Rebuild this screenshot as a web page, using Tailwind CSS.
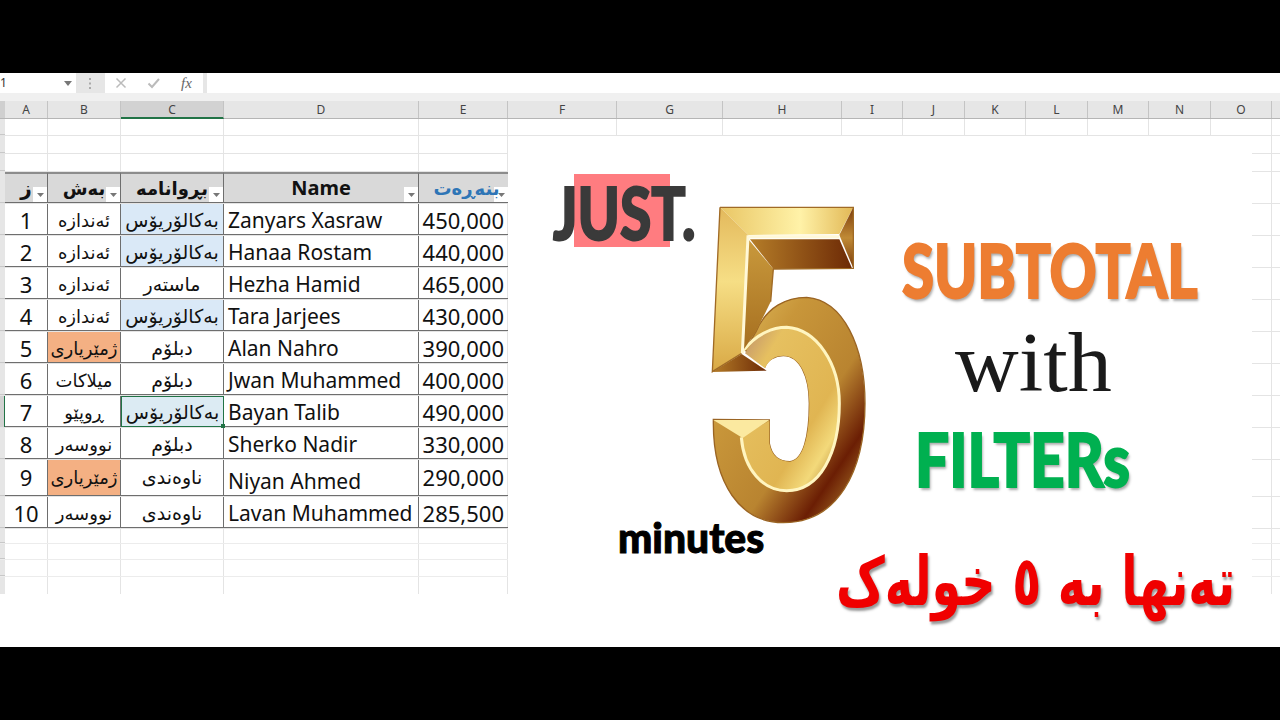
<!DOCTYPE html>
<html lang="ckb">
<head>
  <meta charset="UTF-8">
  <title>SUBTOTAL with FILTERs</title>
  <script src="https://cdn.jsdelivr.net/npm/@tailwindcss/browser@4"></script>
</head>
<body class="bg-black w-[1280px] h-[720px] overflow-hidden font-['Noto_Sans','DejaVu_Sans',sans-serif]">
  <div class="h-[73px]"></div>

  <!-- formula bar -->
  <div class="flex h-5 bg-[#e6e6e6] text-[#555]">
    <div class="w-[76px] bg-white flex items-center justify-between pr-1 text-[12px] text-[#333]">
      <span>1</span>
      <svg width="8" height="5" viewBox="0 0 8 5"><path d="M0 0h8L4 5z" fill="#777"/></svg>
    </div>
    <div class="w-[29px] flex items-center justify-center">
      <svg width="3" height="11" viewBox="0 0 3 11"><path d="M0 0h2v2H0zM0 4.500h2v2H0zM0 9h2v2H0z" fill="#aaa"/></svg>
    </div>
    <div class="w-[98px] bg-white flex items-center">
      <svg class="ml-[10px]" width="12" height="12" viewBox="0 0 12 12"><path d="M1.500 1.500l9 9M10.500 1.500l-9 9" stroke="#bbb" stroke-width="1.500" fill="none"/></svg>
      <svg class="ml-[20px]" width="14" height="12" viewBox="0 0 14 12"><path d="M1.500 6.500l3.500 3.500 7-8" stroke="#bbb" stroke-width="2" fill="none"/></svg>
      <span class="ml-[20px] italic text-[15px] text-[#666] font-['Liberation_Serif',serif]">fx</span>
    </div>
    <div class="w-1"></div>
    <div class="flex-1 bg-white"></div>
  </div>
  <div class="h-2 bg-[#f0f0f0]"></div>

  <!-- column headers -->
  <div class="flex h-[18px] bg-[#e6e6e6] text-[12px] leading-[18px] text-center text-[#444] border-b border-[#b5b5b5]">
    <div class="w-[5px] bg-[#cfcfcf]"></div>
    <div class="w-[43px] border-r border-[#c4c4c4]">A</div>
    <div class="w-[73px] border-r border-[#c4c4c4]">B</div>
    <div class="w-[103px] bg-[#d2d2d2] border-r border-[#c4c4c4] border-b-2 border-b-[#217346] h-[18px]">C</div>
    <div class="w-[195px] border-r border-[#c4c4c4]">D</div>
    <div class="w-[89px] border-r border-[#c4c4c4]">E</div>
    <div class="w-[109px] border-r border-[#c4c4c4]">F</div>
    <div class="w-[106px] border-r border-[#c4c4c4]">G</div>
    <div class="w-[119px] border-r border-[#c4c4c4]">H</div>
    <div class="w-[61px] border-r border-[#c4c4c4]">I</div>
    <div class="w-[62px] border-r border-[#c4c4c4]">J</div>
    <div class="w-[61px] border-r border-[#c4c4c4]">K</div>
    <div class="w-[62px] border-r border-[#c4c4c4]">L</div>
    <div class="w-[61px] border-r border-[#c4c4c4]">M</div>
    <div class="w-[62px] border-r border-[#c4c4c4]">N</div>
    <div class="w-[61px] border-r border-[#c4c4c4]">O</div>
  </div>

  <!-- sheet -->
  <div class="relative h-[528px] bg-white">
    <!-- gridlines, vertical -->
    <div class="absolute top-0 left-[5px] h-[475px] flex">
      <div class="w-[43px] border-r border-[#e4e4e4]"></div>
      <div class="w-[73px] border-r border-[#e4e4e4]"></div>
      <div class="w-[103px] border-r border-[#e4e4e4]"></div>
      <div class="w-[195px] border-r border-[#e4e4e4]"></div>
      <div class="w-[89px] border-r border-[#e4e4e4]"></div>
      <div class="w-[109px] border-r border-[#e4e4e4]"></div>
      <div class="w-[106px] border-r border-[#e4e4e4]"></div>
      <div class="w-[119px] border-r border-[#e4e4e4]"></div>
      <div class="w-[61px] border-r border-[#e4e4e4]"></div>
      <div class="w-[62px] border-r border-[#e4e4e4]"></div>
      <div class="w-[61px] border-r border-[#e4e4e4]"></div>
      <div class="w-[62px] border-r border-[#e4e4e4]"></div>
      <div class="w-[61px] border-r border-[#e4e4e4]"></div>
      <div class="w-[62px] border-r border-[#e4e4e4]"></div>
      <div class="w-[61px] border-r border-[#e4e4e4]"></div>
    </div>

    <!-- rows -->
    <div class="relative text-[21px] text-[#111]">
      <div class="h-[17px] flex border-b border-[#e4e4e4]"><div class="w-[5px] bg-[#e6e6e6] border-b border-[#c8c8c8]"></div></div>
      <div class="h-[18px] flex border-b border-[#e4e4e4]"><div class="w-[5px] bg-[#e6e6e6] border-b border-[#c8c8c8]"></div></div>
      <div class="h-[18px] flex border-b border-[#e4e4e4]"><div class="w-[5px] bg-[#e6e6e6] border-b border-[#c8c8c8]"></div></div>

      <!-- table head -->
      <div class="h-8 flex font-bold text-[18px] leading-none border-b border-[#e4e4e4]">
        <div class="w-[5px] bg-[#e6e6e6] border-b border-[#c8c8c8]"></div>
        <div class="relative w-[43px] bg-[#d9d9d9] border-t-2 border-t-[#8c8c8c] border-b border-r border-[#6e6e6e] flex items-center justify-center text-[20px]">ز<span class="absolute right-0 bottom-0 w-[14px] h-[15px] bg-white flex items-center justify-center"><svg width="7" height="4" viewBox="0 0 7 4"><path d="M0 0h7L3.500 4z" fill="#777"/></svg></span></div>
        <div class="relative w-[73px] bg-[#d9d9d9] border-t-2 border-t-[#8c8c8c] border-b border-r border-[#6e6e6e] flex items-center justify-center">بەش<span class="absolute right-0 bottom-0 w-[14px] h-[15px] bg-white flex items-center justify-center"><svg width="7" height="4" viewBox="0 0 7 4"><path d="M0 0h7L3.500 4z" fill="#777"/></svg></span></div>
        <div class="relative w-[103px] bg-[#d9d9d9] border-t-2 border-t-[#8c8c8c] border-b border-r border-[#6e6e6e] flex items-center justify-center">بڕوانامە<span class="absolute right-0 bottom-0 w-[14px] h-[15px] bg-white flex items-center justify-center"><svg width="7" height="4" viewBox="0 0 7 4"><path d="M0 0h7L3.500 4z" fill="#777"/></svg></span></div>
        <div class="relative w-[195px] bg-[#d9d9d9] border-t-2 border-t-[#8c8c8c] border-b border-r border-[#6e6e6e] flex items-center justify-center text-[20px]">Name<span class="absolute right-0 bottom-0 w-[14px] h-[15px] bg-white flex items-center justify-center"><svg width="7" height="4" viewBox="0 0 7 4"><path d="M0 0h7L3.500 4z" fill="#777"/></svg></span></div>
        <div class="relative w-[89px] bg-[#d9d9d9] border-t-2 border-t-[#8c8c8c] border-b border-[#6e6e6e] flex items-center justify-center pl-[6px] text-[#2e75b6]"><span class="absolute right-0 bottom-0 w-[14px] h-[15px] bg-white flex items-center justify-center"><svg width="7" height="4" viewBox="0 0 7 4"><path d="M0 0h7L3.500 4z" fill="#777"/></svg></span><span class="relative">بنەڕەت</span></div>
      </div>

      <!-- table body -->
      <div class="h-8 flex border-b border-[#e4e4e4]">
        <div class="w-[5px] bg-[#e6e6e6] border-b border-[#c8c8c8]"></div>
        <div class="w-[43px] border-b border-r border-[#6e6e6e] flex items-center justify-center pt-[2px] text-[22px]">1</div>
        <div class="w-[73px] border-b border-r border-[#6e6e6e] flex items-center justify-center pt-[2px] text-[18px]">ئەندازە</div>
        <div class="w-[103px] border-b border-r border-[#6e6e6e] bg-[#dae9f7] flex items-center justify-center pt-[2px] text-[19px]">بەکالۆریۆس</div>
        <div class="w-[195px] border-b border-r border-[#6e6e6e] flex items-center pl-[4px] pt-[4px]">Zanyars Xasraw</div>
        <div class="w-[89px] border-b border-[#6e6e6e] flex items-center justify-end pr-[4px] pt-[2px] text-[22px]">450,000</div>
      </div>
      <div class="h-8 flex border-b border-[#e4e4e4]">
        <div class="w-[5px] bg-[#e6e6e6] border-b border-[#c8c8c8]"></div>
        <div class="w-[43px] border-b border-r border-[#6e6e6e] flex items-center justify-center pt-[2px] text-[22px]">2</div>
        <div class="w-[73px] border-b border-r border-[#6e6e6e] flex items-center justify-center pt-[2px] text-[18px]">ئەندازە</div>
        <div class="w-[103px] border-b border-r border-[#6e6e6e] bg-[#dae9f7] flex items-center justify-center pt-[2px] text-[19px]">بەکالۆریۆس</div>
        <div class="w-[195px] border-b border-r border-[#6e6e6e] flex items-center pl-[4px] pt-[4px]">Hanaa Rostam</div>
        <div class="w-[89px] border-b border-[#6e6e6e] flex items-center justify-end pr-[4px] pt-[2px] text-[22px]">440,000</div>
      </div>
      <div class="h-8 flex border-b border-[#e4e4e4]">
        <div class="w-[5px] bg-[#e6e6e6] border-b border-[#c8c8c8]"></div>
        <div class="w-[43px] border-b border-r border-[#6e6e6e] flex items-center justify-center pt-[2px] text-[22px]">3</div>
        <div class="w-[73px] border-b border-r border-[#6e6e6e] flex items-center justify-center pt-[2px] text-[18px]">ئەندازە</div>
        <div class="w-[103px] border-b border-r border-[#6e6e6e] flex items-center justify-center pt-[2px] text-[19px]">ماستەر</div>
        <div class="w-[195px] border-b border-r border-[#6e6e6e] flex items-center pl-[4px] pt-[4px]">Hezha Hamid</div>
        <div class="w-[89px] border-b border-[#6e6e6e] flex items-center justify-end pr-[4px] pt-[2px] text-[22px]">465,000</div>
      </div>
      <div class="h-8 flex border-b border-[#e4e4e4]">
        <div class="w-[5px] bg-[#e6e6e6] border-b border-[#c8c8c8]"></div>
        <div class="w-[43px] border-b border-r border-[#6e6e6e] flex items-center justify-center pt-[2px] text-[22px]">4</div>
        <div class="w-[73px] border-b border-r border-[#6e6e6e] flex items-center justify-center pt-[2px] text-[18px]">ئەندازە</div>
        <div class="w-[103px] border-b border-r border-[#6e6e6e] bg-[#dae9f7] flex items-center justify-center pt-[2px] text-[19px]">بەکالۆریۆس</div>
        <div class="w-[195px] border-b border-r border-[#6e6e6e] flex items-center pl-[4px] pt-[4px]">Tara Jarjees</div>
        <div class="w-[89px] border-b border-[#6e6e6e] flex items-center justify-end pr-[4px] pt-[2px] text-[22px]">430,000</div>
      </div>
      <div class="h-8 flex border-b border-[#e4e4e4]">
        <div class="w-[5px] bg-[#e6e6e6] border-b border-[#c8c8c8]"></div>
        <div class="w-[43px] border-b border-r border-[#6e6e6e] flex items-center justify-center pt-[2px] text-[22px]">5</div>
        <div class="w-[73px] border-b border-r border-[#6e6e6e] bg-[#f4b083] flex items-center justify-center pt-[2px] text-[18px]">ژمێریاری</div>
        <div class="w-[103px] border-b border-r border-[#6e6e6e] flex items-center justify-center pt-[2px] text-[19px]">دبلۆم</div>
        <div class="w-[195px] border-b border-r border-[#6e6e6e] flex items-center pl-[4px] pt-[4px]">Alan Nahro</div>
        <div class="w-[89px] border-b border-[#6e6e6e] flex items-center justify-end pr-[4px] pt-[2px] text-[22px]">390,000</div>
      </div>
      <div class="h-8 flex border-b border-[#e4e4e4]">
        <div class="w-[5px] bg-[#e6e6e6] border-b border-[#c8c8c8]"></div>
        <div class="w-[43px] border-b border-r border-[#6e6e6e] flex items-center justify-center pt-[2px] text-[22px]">6</div>
        <div class="w-[73px] border-b border-r border-[#6e6e6e] flex items-center justify-center pt-[2px] text-[18px]">میلاکات</div>
        <div class="w-[103px] border-b border-r border-[#6e6e6e] flex items-center justify-center pt-[2px] text-[19px]">دبلۆم</div>
        <div class="w-[195px] border-b border-r border-[#6e6e6e] flex items-center pl-[4px] pt-[4px]">Jwan Muhammed</div>
        <div class="w-[89px] border-b border-[#6e6e6e] flex items-center justify-end pr-[4px] pt-[2px] text-[22px]">400,000</div>
      </div>
      <div class="h-8 flex border-b border-[#e4e4e4]">
        <div class="w-[5px] bg-[#d2d2d2] border-r border-[#217346]"></div>
        <div class="w-[43px] border-b border-r border-[#6e6e6e] flex items-center justify-center pt-[2px] text-[22px]">7</div>
        <div class="w-[73px] border-b border-r border-[#6e6e6e] flex items-center justify-center pt-[2px] text-[18px]">ڕوپێو</div>
        <div class="relative w-[103px] border border-[#217346] bg-[#dcebf3] flex items-center justify-center pt-[2px] text-[19px]">بەکالۆریۆس<span class="absolute -right-[2px] -bottom-[2px] w-[4px] h-[4px] bg-[#217346]"></span></div>
        <div class="w-[195px] border-b border-r border-[#6e6e6e] flex items-center pl-[4px] pt-[4px]">Bayan Talib</div>
        <div class="w-[89px] border-b border-[#6e6e6e] flex items-center justify-end pr-[4px] pt-[2px] text-[22px]">490,000</div>
      </div>
      <div class="h-8 flex border-b border-[#e4e4e4]">
        <div class="w-[5px] bg-[#e6e6e6] border-b border-[#c8c8c8]"></div>
        <div class="w-[43px] border-b border-r border-[#6e6e6e] flex items-center justify-center pt-[2px] text-[22px]">8</div>
        <div class="w-[73px] border-b border-r border-[#6e6e6e] flex items-center justify-center pt-[2px] text-[18px]">نووسەر</div>
        <div class="w-[103px] border-b border-r border-[#6e6e6e] flex items-center justify-center pt-[2px] text-[19px]">دبلۆم</div>
        <div class="w-[195px] border-b border-r border-[#6e6e6e] flex items-center pl-[4px] pt-[4px]">Sherko Nadir</div>
        <div class="w-[89px] border-b border-[#6e6e6e] flex items-center justify-end pr-[4px] pt-[2px] text-[22px]">330,000</div>
      </div>
      <div class="h-[37px] flex border-b border-[#e4e4e4]">
        <div class="w-[5px] bg-[#e6e6e6] border-b border-[#c8c8c8]"></div>
        <div class="w-[43px] border-b border-r border-[#6e6e6e] flex items-center justify-center text-[22px]">9</div>
        <div class="w-[73px] border-b border-r border-[#6e6e6e] bg-[#f4b083] flex items-center justify-center text-[18px]">ژمێریاری</div>
        <div class="w-[103px] border-b border-r border-[#6e6e6e] flex items-center justify-center text-[19px]">ناوەندی</div>
        <div class="w-[195px] border-b border-r border-[#6e6e6e] flex items-center pl-[4px] pt-[9px]">Niyan Ahmed</div>
        <div class="w-[89px] border-b border-[#6e6e6e] flex items-center justify-end pr-[4px] text-[22px]">290,000</div>
      </div>
      <div class="h-8 flex border-b border-[#e4e4e4]">
        <div class="w-[5px] bg-[#e6e6e6] border-b border-[#c8c8c8]"></div>
        <div class="w-[43px] border-b border-r border-[#6e6e6e] flex items-center justify-center pt-[2px] text-[22px]">10</div>
        <div class="w-[73px] border-b border-r border-[#6e6e6e] flex items-center justify-center pt-[2px] text-[18px]">نووسەر</div>
        <div class="w-[103px] border-b border-r border-[#6e6e6e] flex items-center justify-center pt-[2px] text-[19px]">ناوەندی</div>
        <div class="w-[195px] border-b border-r border-[#6e6e6e] flex items-center pl-[4px] pt-[4px]">Lavan Muhammed</div>
        <div class="w-[89px] border-b border-[#6e6e6e] flex items-center justify-end pr-[4px] pt-[2px] text-[22px]">285,500</div>
      </div>

      <div class="h-[15px] flex border-b border-[#ececec]"><div class="w-[5px] bg-[#e6e6e6] border-b border-[#c8c8c8]"></div></div>
      <div class="h-4 flex border-b border-[#ececec]"><div class="w-[5px] bg-[#e6e6e6] border-b border-[#c8c8c8]"></div></div>
      <div class="h-[17px] flex border-b border-[#ececec]"><div class="w-[5px] bg-[#e6e6e6] border-b border-[#c8c8c8]"></div></div>
      <div class="h-[17px] flex"><div class="w-[5px] bg-[#e6e6e6]"></div></div>
    </div>

    <!-- pasted picture over the sheet -->
    <div class="absolute left-[508px] top-[17px] w-[744px] h-[511px] bg-white"></div>

    <!-- JUST. -->
    <div class="absolute left-[574px] top-[55px] w-[96px] h-[73px] bg-[#ff7c80]"></div>
    <div class="absolute left-[553px] top-[53px] text-[72px] leading-[80px] font-black text-[#3a3a3a] font-['Lato',sans-serif] origin-left scale-x-[.79] whitespace-nowrap [-webkit-text-stroke:2px_#3a3a3a]">JUST.</div>

    <!-- gold 5 -->
    <svg class="absolute left-[680px] top-[71px]" width="200" height="350" viewBox="0 0 600 1050">
      <defs>
        <linearGradient id="g-top" x1="0" y1="0" x2="1" y2="0"><stop offset="0" stop-color="#e9c665"/><stop offset=".6" stop-color="#fff2a8"/><stop offset="1" stop-color="#e2b856"/></linearGradient>
        <linearGradient id="g-under" x1="0" y1="0" x2="1" y2="0"><stop offset="0" stop-color="#b57d28"/><stop offset="1" stop-color="#6d2a06"/></linearGradient>
        <linearGradient id="g-corner" x1="0" y1="0" x2="0" y2="1"><stop offset="0" stop-color="#7a3a0c"/><stop offset=".5" stop-color="#c08a35"/><stop offset="1" stop-color="#7a3a0c"/></linearGradient>
        <linearGradient id="g-left" x1="0" y1="0" x2="0" y2="1"><stop offset="0" stop-color="#e3b95c"/><stop offset=".45" stop-color="#f6de85"/><stop offset="1" stop-color="#d9a945"/></linearGradient>
        <linearGradient id="g-col" x1="0" y1="0" x2="0" y2="1"><stop offset="0" stop-color="#c9993c"/><stop offset="1" stop-color="#a66f20"/></linearGradient>
        <linearGradient id="g-bowl" x1="0" y1="0" x2="1" y2="1"><stop offset="0" stop-color="#e6c565"/><stop offset=".3" stop-color="#c8963a"/><stop offset=".6" stop-color="#b98430"/><stop offset=".79" stop-color="#6b1e04"/><stop offset=".9" stop-color="#9a6020"/><stop offset="1" stop-color="#9a6020"/></linearGradient>
        <linearGradient id="g-front" x1="0" y1="0" x2="1" y2="1"><stop offset="0" stop-color="#b98a70"/><stop offset=".22" stop-color="#e6c060"/><stop offset=".65" stop-color="#e0b552"/><stop offset=".8" stop-color="#f3d97a"/><stop offset="1" stop-color="#a26c20"/></linearGradient>
      </defs>
      <path d="M228 425C260 350 320 322 380 322C490 330 555 470 555 640C555 850 470 998 310 998C180 998 100 880 100 700V688L268 690V760C275 800 300 815 330 815C370 810 388 740 388 640C388 560 360 497 310 497C285 497 262 510 255 530L195 480Z" fill="url(#g-bowl)" stroke="#9a6423" stroke-width="4"/>
      <path d="M195 490C230 430 280 415 320 415C410 420 478 520 478 640C478 790 420 905 320 905C250 905 190 840 182 742L268 692V760C275 800 300 815 330 815C370 810 388 740 388 640C388 560 360 497 310 497C285 497 265 510 255 535Z" fill="url(#g-front)"/>
      <path d="M190 482C230 430 280 412 320 412C410 418 478 520 478 640C478 790 420 902 320 902C250 902 192 840 184 742" fill="none" stroke="#fff5c0" stroke-width="9"/>
      <path d="M100 690H268L188 744Z" fill="#fbe9a0"/>
      <path d="M205 148L280 237L272 335L228 425L190 480Z" fill="url(#g-col)"/>
      <path d="M210 148H478L516 235L280 237Z" fill="url(#g-under)"/>
      <path d="M120 52H520L478 132L205 135Z" fill="url(#g-top)"/>
      <path d="M520 52V235L478 135Z" fill="url(#g-corner)"/>
      <path d="M120 52L205 135L185 490L97 545Z" fill="url(#g-left)"/>
      <path d="M185 492L260 542L97 546Z" fill="url(#g-under)"/>
      <path d="M120 52H520V235L280 237L272 335M185 490L97 545L120 52" fill="none" stroke="#a06a25" stroke-width="4"/>
      <path d="M478 140H204L187 490" fill="none" stroke="#fff8d8" stroke-width="9"/>
    </svg>

    <!-- minutes -->
    <div class="absolute left-[618px] top-[396px] text-[42px] leading-[44px] font-black text-black font-['Lato',sans-serif] origin-left scale-x-[.97] whitespace-nowrap [-webkit-text-stroke:1px_#000]">minutes</div>

    <!-- SUBTOTAL -->
    <div class="absolute left-[902px] top-[110px] text-[75px] leading-[80px] font-black text-[#ed7d31] font-['Lato',sans-serif] origin-left scale-x-[.775] whitespace-nowrap [-webkit-text-stroke:2px_#ed7d31] [text-shadow:2px_3px_3px_#aaa]">SUBTOTAL</div>

    <!-- with -->
    <div class="absolute left-[955px] top-[199px] text-[84px] leading-[90px] text-[#1a1a1a] font-['Liberation_Serif',serif] origin-left scale-x-[1.05] whitespace-nowrap">with</div>

    <!-- FILTERs -->
    <div class="absolute left-[915px] top-[300px] text-[74px] leading-[80px] font-black text-[#00b050] font-['Lato',sans-serif] origin-left scale-x-[.815] whitespace-nowrap [-webkit-text-stroke:2px_#00b050] [text-shadow:2px_3px_3px_#aaa]">FILTERs</div>

    <!-- Kurdish title -->
    <div dir="rtl" class="absolute right-[45px] top-[418px] text-[68px] leading-[90px] font-bold text-[#f00000] font-['DejaVu_Sans',sans-serif] origin-right scale-x-[.7] whitespace-nowrap [text-shadow:2px_3px_3px_#999]">تەنها بە ٥ خولەک</div>
  </div>
</body>
</html>
